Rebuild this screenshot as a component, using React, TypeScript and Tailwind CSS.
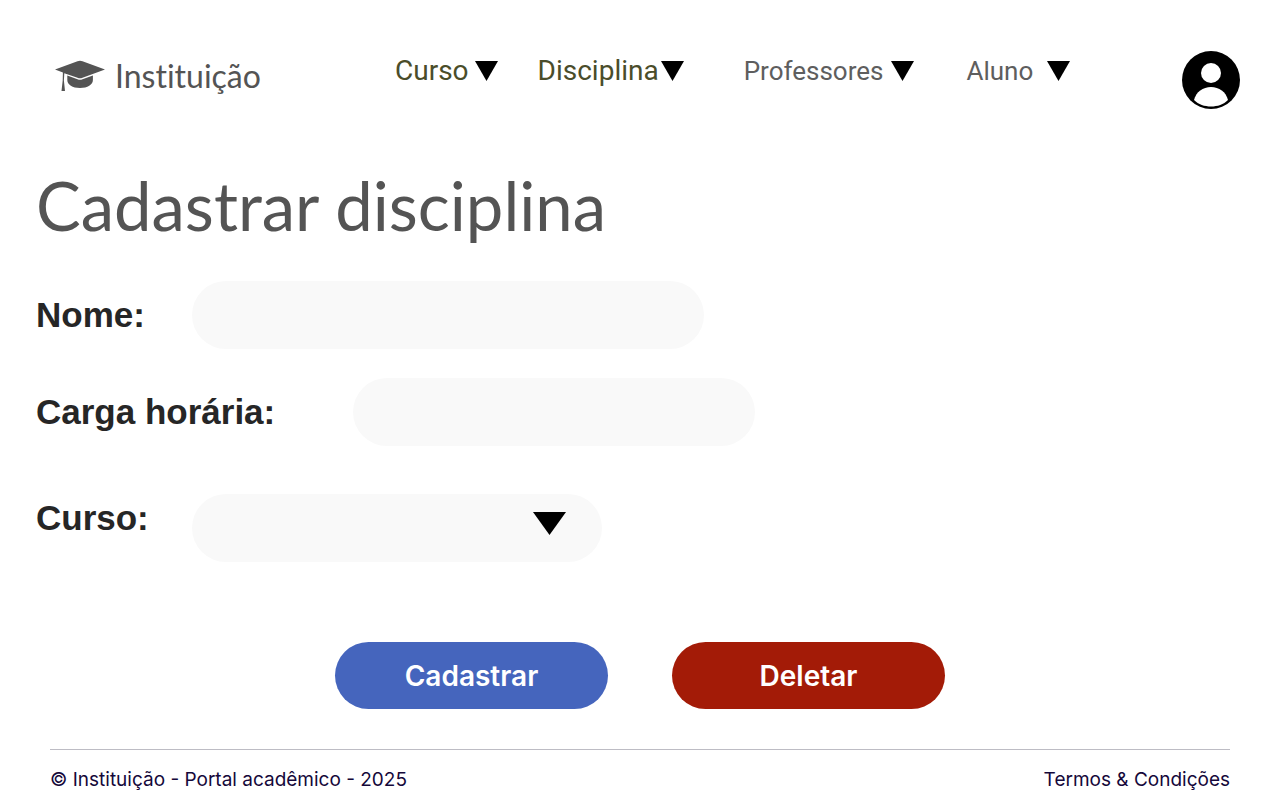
import { FormEvent, useState } from "react";

type NavItem = { label: string; style: string; active: boolean };

const navItems: NavItem[] = [
  { label: "Curso", style: "mr-10 gap-1.5", active: true },
  { label: "Disciplina", style: "mr-15 gap-0.5", active: true },
  { label: "Professores", style: "mr-13 gap-2", active: false },
  { label: "Aluno", style: "gap-3.5", active: false },
];

function Triangle({ className }: { className: string }) {
  return (
    <svg viewBox="0 0 24 20" preserveAspectRatio="none" className={className} aria-hidden="true">
      <path d="M0 0H24L12 20Z" fill="#000" />
    </svg>
  );
}

function GraduationCap() {
  return (
    <svg viewBox="0 0 50 32" className="h-8 w-[50px] shrink-0" fill="#545454" aria-hidden="true">
      <path d="M22.5 1.2Q25 .3 27.500 1.200L50 9.500 27.500 17.800Q25 18.800 22.500 17.800L9.300 13.200 8.900 20.500 10 31H6.500L7.700 20.500 7.900 12.600 0 9.500Z" />
      <path d="M12.300 15.500 22.500 19.300Q25 20.300 27.500 19.300L37.900 15.500V20C37.900 24.500 32.500 28 25 28S12.300 24.500 12.300 20Z" />
    </svg>
  );
}

function Avatar() {
  return (
    <svg viewBox="0 0 58 58" className="size-[58px]" aria-hidden="true">
      <circle cx="29" cy="29" r="29" fill="#000" />
      <circle cx="29" cy="22" r="10" fill="#fff" />
      <path d="M12 49C14 41 21 36 29 36S44 41 46 49C41.500 53.500 35.500 55.500 29 55.500S16.500 53.500 12 49Z" fill="#fff" />
    </svg>
  );
}

export default function App() {
  const [name, setName] = useState("");
  const [hours, setHours] = useState("");
  const [course, setCourse] = useState("");

  const submit = (event: FormEvent) => event.preventDefault();
  const clear = () => {
    setName("");
    setHours("");
    setCourse("");
  };

  const labelStyle = "shrink-0 font-['Liberation_Sans',sans-serif] text-[35px] leading-10 font-bold text-[#262626]";
  const fieldStyle = "h-17 w-full rounded-full bg-[#f9f9f9] px-8 text-2xl text-[#262626] outline-none focus:ring-2 focus:ring-[#4565bd]";
  const buttonStyle = "h-[67px] w-[273px] rounded-full font-['Inter',sans-serif] text-[28px] leading-8 font-semibold text-white";

  return (
    <div className="flex min-h-screen flex-col bg-white">
      <header className="flex items-start pt-[51px] pr-10 pl-[55px]">
        <a href="#" className="flex w-[340px] shrink-0 items-center gap-2.5 pt-[5px] font-['Lato',sans-serif] text-[32px] leading-10 text-[#545454] [font-variant-ligatures:none]">
          <GraduationCap />
          Instituição
        </a>
        <nav className="flex items-center pt-1 font-['Roboto',sans-serif] leading-8" aria-label="Principal">
          {navItems.map((item) => (
            <button
              key={item.label}
              type="button"
              className={`flex items-center ${item.style} ${item.active ? "text-[28px] text-[#4a4d2a]" : "text-[26px] text-[#5e5e5e]"}`}
            >
              {item.label}
              <Triangle className="h-5 w-[23px]" />
            </button>
          ))}
        </nav>
        <button type="button" className="ml-auto" aria-label="Perfil">
          <Avatar />
        </button>
      </header>

      <main className="flex flex-col px-9 pt-14">
        <h1 className="font-['Lato',sans-serif] text-[67px] leading-20 text-[#545454]">Cadastrar disciplina</h1>
        <form onSubmit={submit} className="flex flex-col pt-9">
          <div className="flex items-center">
            <label htmlFor="nome" className={`${labelStyle} w-39`}>Nome:</label>
            <div className="w-full max-w-128">
              <input id="nome" type="text" value={name} onChange={(e) => setName(e.target.value)} className={fieldStyle} />
            </div>
          </div>
          <div className="flex items-center pt-[29px]">
            <label htmlFor="carga" className={`${labelStyle} w-[317px]`}>Carga horária:</label>
            <div className="w-full max-w-[402px]">
              <input id="carga" type="text" value={hours} onChange={(e) => setHours(e.target.value)} className={fieldStyle} />
            </div>
          </div>
          <div className="flex items-start pt-12">
            <label htmlFor="curso" className={`${labelStyle} w-39 pt-1`}>Curso:</label>
            <div className="relative w-full max-w-[410px]">
              <select id="curso" value={course} onChange={(e) => setCourse(e.target.value)} className={`${fieldStyle} appearance-none`}>
                <option value=""></option>
              </select>
              <Triangle className="pointer-events-none absolute top-[18px] right-9 h-[23px] w-[33px]" />
            </div>
          </div>
          <div className="flex justify-center gap-16 pt-20">
            <button type="submit" className={`${buttonStyle} bg-[#4565bd]`}>Cadastrar</button>
            <button type="button" onClick={clear} className={`${buttonStyle} bg-[#a31b07]`}>Deletar</button>
          </div>
        </form>
      </main>

      <footer className="mt-auto pr-[50px] pl-[50px] font-['Inter',sans-serif] text-[19px] leading-6 text-[#15083a]">
        <hr className="border-[#bdbcc4]" />
        <div className="flex justify-between pt-[18px] pb-2">
          <p>© Instituição - Portal acadêmico - 2025</p>
          <a href="#">Termos &amp; Condições</a>
        </div>
      </footer>
    </div>
  );
}
